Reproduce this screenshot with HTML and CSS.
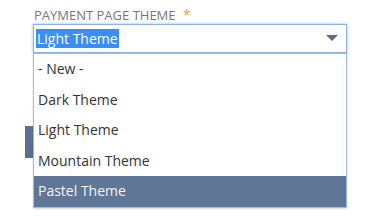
FILE: index.html
```html
<!DOCTYPE html>
<html lang="en">

<head>
  <meta charset="UTF-8">
  <meta name="viewport" content="width=device-width, initial-scale=1.0">
  <title>Payment Page Theme</title>
  <link rel="stylesheet" href="styles.css">
</head>

<body>
  <div class="form-container">
    <div class="field">
      <label class="field-label">Payment Page Theme <span class="required">*</span></label>
      <div class="select-wrap">
        <div class="select-input">
          <span class="select-value">Light Theme</span>
          <svg class="select-arrow" width="12" height="6" viewBox="0 0 12 6">
            <path d="M0 0 H12 L6 6 Z" fill="#5b6b80" />
          </svg>
        </div>
        <ul class="dropdown">
          <li>- New -</li>
          <li>Dark Theme</li>
          <li>Light Theme</li>
          <li>Mountain Theme</li>
          <li class="active">Pastel Theme</li>
        </ul>
      </div>
    </div>

    <!-- button sits under the open list, only its edge shows -->
    <div class="action-btn" aria-hidden="true"></div>
  </div>
</body>

</html>
```

FILE: styles.css
```css
body {
  margin: 0;
  min-height: 100vh;
  background: #fff;
  font-family: "Open Sans", "Liberation Sans", sans-serif;
  color: #333;
}

.form-container {
  padding: 6px 0 0 25px;
}

.field {
  width: 314px;
  margin-left: 8px;
}

.field-label {
  display: block;
  font-size: 13px;
  line-height: 18px;
  color: #777;
  text-transform: uppercase;
  padding-left: 1px;
}

.required {
  color: #e8a33d;
  font-size: 14px;
  margin-left: 4px;
}

.select-wrap {
  position: relative;
}

.select-input {
  display: flex;
  align-items: center;
  justify-content: space-between;
  height: 27px;
  border: 1px solid #8fb3df;
  box-shadow: 0 0 3px rgba(80, 140, 220, 0.6);
  padding: 0 8px 0 2px;
  background: #fff;
}

.select-value {
  background: #3a8ef5;
  color: #fff;
  font-size: 14px;
  line-height: 19px;
  padding: 0 1px;
}

.select-arrow {
  display: block;
  margin-top: -2px;
}

.dropdown {
  position: absolute;
  top: 100%;
  left: 0;
  right: 0;
  z-index: 10;
  list-style: none;
  margin: 0;
  padding: 0;
  background: #fff;
  border: 1px solid #9dbde3;
  box-shadow: 0 1px 2px rgba(0, 0, 0, 0.15);
}

.dropdown li {
  height: 30.5px;
  line-height: 30px;
  padding-left: 4px;
  font-size: 14px;
  color: #333;
}

.dropdown li.active {
  background: #607697;
  color: #f2f4f8;
}

.action-btn {
  width: 100px;
  height: 32px;
  margin-top: 73px;
  background: #5b6f91;
}
```
